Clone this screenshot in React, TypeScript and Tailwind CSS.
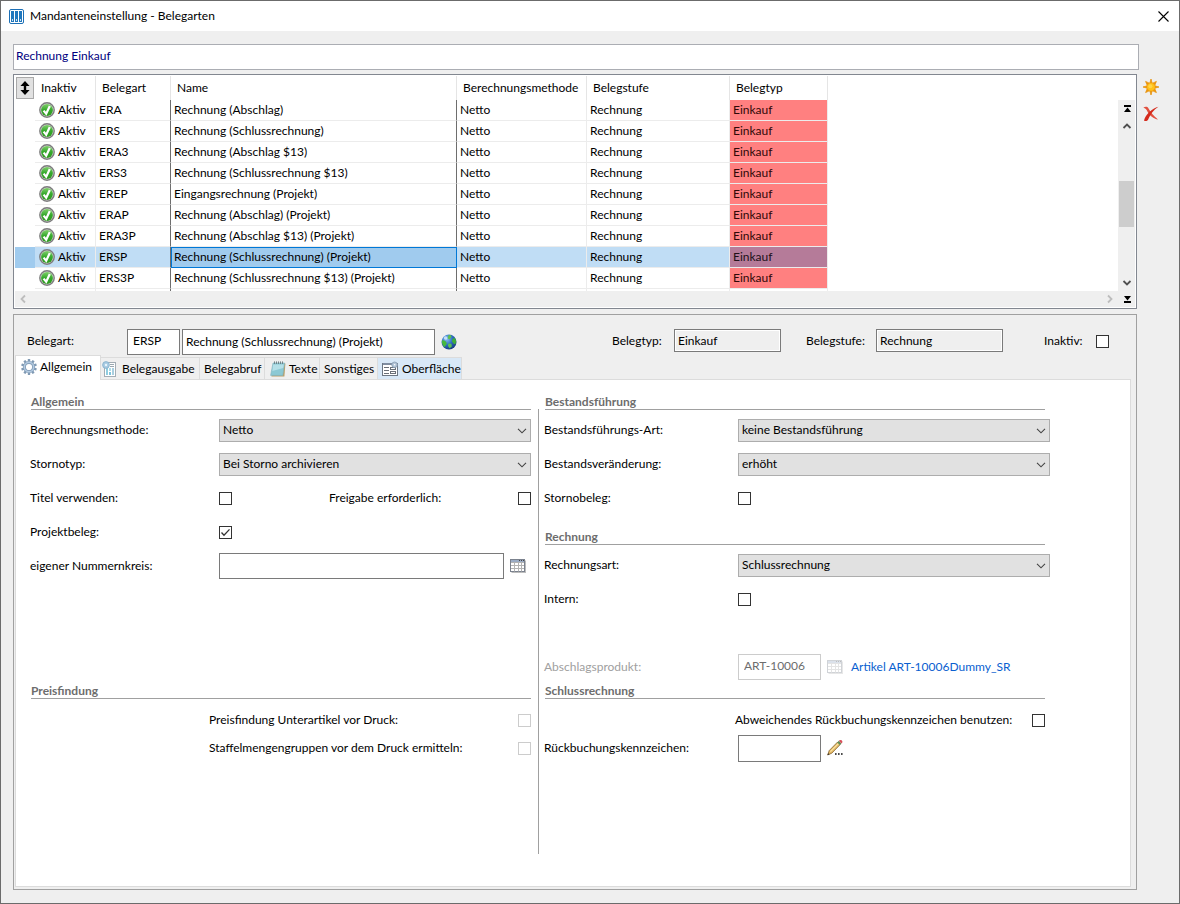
import React, { useState } from "react";

const rows: [string, string][] = [
  ["ERA", "Rechnung (Abschlag)"],
  ["ERS", "Rechnung (Schlussrechnung)"],
  ["ERA3", "Rechnung (Abschlag $13)"],
  ["ERS3", "Rechnung (Schlussrechnung $13)"],
  ["EREP", "Eingangsrechnung (Projekt)"],
  ["ERAP", "Rechnung (Abschlag) (Projekt)"],
  ["ERA3P", "Rechnung (Abschlag $13) (Projekt)"],
  ["ERSP", "Rechnung (Schlussrechnung) (Projekt)"],
  ["ERS3P", "Rechnung (Schlussrechnung $13) (Projekt)"],
];

function AppIcon() {
  return (
    <svg width="15" height="15" viewBox="0 0 15 15">
      <rect x="0.5" y="0.5" width="14" height="14" rx="1.5" fill="#fff" stroke="#1c6fb5" />
      {[2, 6, 10].map((x) => (
        <g key={x}>
          <rect x={x} y="2" width="3" height="11" fill="#1f77bd" />
          <rect x={x + 1} y="10" width="1" height="2" fill="#cfe3f3" />
        </g>
      ))}
    </svg>
  );
}

function CheckBadge() {
  return (
    <svg width="16" height="16" viewBox="0 0 16 16" className="shrink-0">
      <defs>
        <linearGradient id="badge" x1="0" y1="0" x2="0" y2="1">
          <stop offset="0" stopColor="#7fcf6a" />
          <stop offset="0.5" stopColor="#35a82c" />
          <stop offset="1" stopColor="#2f9a1f" />
        </linearGradient>
      </defs>
      <circle cx="8" cy="8" r="7.2" fill="#d4d4d4" stroke="#7d7d7d" strokeWidth="1.4" />
      <circle cx="8" cy="8" r="5.9" fill="url(#badge)" />
      <path d="M4.6 8.6 L7.2 11.8 L10.8 4" fill="none" stroke="#fff" strokeWidth="2.2" />
    </svg>
  );
}

function Sun() {
  return (
    <svg width="16" height="16" viewBox="0 0 16 16">
      <path
        d="M8 0 L9.2 4.4 L13.4 2.4 L11.6 6.8 L16 8 L11.6 9.2 L13.4 13.6 L9.2 11.6 L8 16 L6.8 11.6 L2.6 13.6 L4.4 9.2 L0 8 L4.4 6.8 L2.6 2.4 L6.8 4.4 Z"
        fill="#e8940f"
        stroke="#e8940f"
        strokeWidth="0.8"
      />
      <circle cx="8" cy="8" r="4.2" fill="#ffc21c" stroke="#f0960a" strokeWidth="0.6" />
      <circle cx="7.4" cy="7.2" r="2" fill="#ffd548" />
    </svg>
  );
}

function RedX() {
  return (
    <svg width="16" height="16" viewBox="0 0 16 16">
      <path d="M0.4 1.8 C2 0.4 4.4 0.6 5.4 2.2 C7.4 5.6 10 9.5 15 13.4 C10.6 12.8 6.6 9.4 4.4 5.4 C3.4 3.4 2.4 2.4 0.4 1.8 Z" fill="#e2503f" />
      <path d="M15.4 0.8 C10.6 4 7.4 8 5.4 13 C4.8 15 2.4 15.8 1 14.4 C2.6 8.8 9 2.2 15.4 0.8 Z" fill="#d42a1c" />
    </svg>
  );
}

function Globe() {
  return (
    <svg width="16" height="16" viewBox="0 0 16 16">
      <defs>
        <radialGradient id="sea" cx="0.35" cy="0.3" r="0.75">
          <stop offset="0" stopColor="#8fc4f2" />
          <stop offset="0.5" stopColor="#2f6fc4" />
          <stop offset="1" stopColor="#173a80" />
        </radialGradient>
      </defs>
      <circle cx="8" cy="8" r="7.5" fill="url(#sea)" />
      <path d="M7.4 1.4 C9 0.6 10.6 1.2 10.4 3 L8.4 5.6 L6.6 4.2 Z" fill="#5fc04a" />
      <path d="M11.4 5 L13.8 3.8 L15.2 7 L14.4 10.4 L12.4 9.6 L11 7.4 Z" fill="#3fae3a" />
      <path d="M1 6.6 C2.4 5.8 4 6.6 5.2 8 L5.8 10 L4.6 11.6 L3.6 13.2 C1.6 11.8 0.6 9.4 1 6.6 Z" fill="#46b83e" />
      <path d="M7.4 9.4 L10.4 9.8 L10.8 12.6 L8.6 14.2 L7 12 Z" fill="#5cc552" />
      <circle cx="4.6" cy="4" r="1.8" fill="#d6ecff" opacity="0.8" />
    </svg>
  );
}

function Gear() {
  const teeth = [0, 36, 72, 108, 144, 180, 216, 252, 288, 324];
  return (
    <svg width="16" height="16" viewBox="0 0 16 16" className="shrink-0">
      {teeth.map((a) => (
        <rect key={a} x="6.8" y="0.1" width="2.4" height="3" rx="0.4" fill="#7f99b3" transform={`rotate(${a} 8 8)`} />
      ))}
      <circle cx="8" cy="8" r="4.6" fill="#fff" stroke="#86a0ba" strokeWidth="3" />
      <circle cx="8" cy="8" r="4.7" fill="none" stroke="#b4cbe2" strokeWidth="1.4" />
    </svg>
  );
}

function ReportIcon() {
  return (
    <svg width="16" height="16" viewBox="0 0 16 16" className="shrink-0">
      <rect x="2.5" y="1.5" width="11" height="14" fill="#fff" stroke="#a3adb5" />
      <rect x="4" y="7" width="2" height="7" fill="#8fcde0" />
      <rect x="7" y="7" width="2" height="3" fill="#a9dbe8" />
      <rect x="7" y="11" width="2" height="3" fill="#7fc4dc" />
      <rect x="10" y="7" width="2" height="7" fill="#a9cfe0" />
      <path d="M8 3.5h4M8 5.5h4" stroke="#9aa7b0" />
      <circle cx="4" cy="4" r="3.4" fill="#a8cbe2" stroke="#84aeca" strokeWidth="0.8" />
      <circle cx="4" cy="4" r="1.2" fill="#e8f4fb" />
    </svg>
  );
}

function NotepadIcon() {
  return (
    <svg width="16" height="16" viewBox="0 0 16 16" className="shrink-0">
      <path d="M4 2.5 L15.4 2.5 L14.4 15.6 L1.4 15.6 Z" fill="#b9a06a" />
      <path d="M3 2 L14.6 2 L12.8 14.4 L0.6 14.4 Z" fill="#8cc9d4" stroke="#7fb2be" strokeWidth="0.6" />
      <path d="M3.2 3.6 L13.8 3.6 L13.2 7 L2.4 10 Z" fill="#b5e0e8" />
      <path d="M4.5 0.4v2.6M6.5 0.4v2.6M8.5 0.4v2.6M10.5 0.4v2.6M12.5 0.4v2.6" stroke="#6b7a80" strokeWidth="0.9" />
    </svg>
  );
}

function FormIcon() {
  return (
    <svg width="16" height="16" viewBox="0 0 16 16" className="shrink-0">
      <rect x="0.5" y="2.5" width="15" height="12" fill="#fff" stroke="#6c7683" />
      <rect x="1" y="2" width="14" height="2" fill="#7f8da0" />
      <path d="M2 6.5h5M2 9.5h5M2 12.5h5" stroke="#6a6f77" />
      <rect x="8.5" y="6.5" width="5" height="2" fill="#fff" stroke="#6a6f77" />
      <rect x="8.5" y="10.5" width="5" height="2" fill="#fff" stroke="#6a6f77" />
      <circle cx="12.6" cy="3.8" r="2.8" fill="#b4c6d8" stroke="#869bb0" strokeWidth="0.8" />
      <circle cx="12.6" cy="3.8" r="0.8" fill="#fff" />
    </svg>
  );
}

function GridIcon({ faded = false }: { faded?: boolean }) {
  return (
    <svg width="16" height="14" viewBox="0 0 16 14" opacity={faded ? 0.35 : 1} className="shrink-0">
      <rect x="1.5" y="1.5" width="14.5" height="12.5" fill="#bdbdbd" />
      <rect x="0.5" y="0.5" width="14" height="12" fill="#fff" stroke="#7b828e" />
      <rect x="1" y="1" width="13" height="2" fill="#9aabc4" />
      <path d="M1 3.5h13M1 6.5h13M1 9.5h13" stroke="#b3b3b3" />
      <path d="M4.5 3v9.5M8.5 3v9.5M11.5 3v9.5" stroke="#b3b3b3" />
      <path d="M9 1.5h1M11 1.5h1M13 1.5h1" stroke="#444" />
    </svg>
  );
}

function Pencil() {
  return (
    <svg width="17" height="18" viewBox="0 0 17 18" className="shrink-0">
      <path d="M0.6 16 L2.2 11.6 L10.6 3 L13.2 5.6 L4.8 14.2 Z" fill="#e3b764" stroke="#7a5a28" strokeWidth="0.7" />
      <path d="M3.4 12.6 L11.6 4.4" stroke="#fbe6a6" strokeWidth="1.2" />
      <path d="M10.2 3.4 L11.8 1.8 L14.4 4.4 L12.8 6 Z" fill="#5f8f5a" />
      <path d="M11.8 1.8 C12.6 0.8 13.8 0.6 14.8 1.4 C15.8 2.4 15.6 3.4 14.4 4.4 Z" fill="#d8505a" />
      <path d="M0.6 16 L1.2 14.2 L2.6 15.2 Z" fill="#222" />
      <path d="M8 15h1.6M11 15h1.6M14 15h1.6" stroke="#111" strokeWidth="1.6" />
    </svg>
  );
}

function Chevron({ d, className }: { d: string; className: string }) {
  return (
    <svg width="10" height="10" viewBox="0 0 10 10" className={className}>
      <path d={d} fill="none" stroke="currentColor" strokeWidth="1.8" />
    </svg>
  );
}

function Check(props: { id: string; checked?: boolean; disabled?: boolean }) {
  const [on, setOn] = useState(!!props.checked);
  return (
    <span className="relative flex size-[13px] shrink-0">
      <input
        id={props.id}
        type="checkbox"
        checked={on}
        disabled={props.disabled}
        onChange={() => setOn(!on)}
        className="size-[13px] appearance-none border border-[#333] bg-white disabled:border-[#ccc]"
      />
      {on && (
        <svg width="13" height="13" viewBox="0 0 13 13" className="pointer-events-none absolute inset-0">
          <path d="M2.5 6.5 L5 9.2 L10.5 3.4" fill="none" stroke="#333" strokeWidth="1.3" />
        </svg>
      )}
    </span>
  );
}

function Select({ id, value }: { id: string; value: string }) {
  return (
    <span className="relative flex flex-1">
      <select id={id} className="h-[23px] w-full appearance-none border border-[#adadad] bg-[#e1e1e1] px-[3px] leading-[20px]">
        <option>{value}</option>
      </select>
      <svg width="10" height="6" viewBox="0 0 10 6" className="pointer-events-none absolute top-[9px] right-[4px]">
        <path d="M1 0.8 L5 4.8 L9 0.8" fill="none" stroke="#444" strokeWidth="1.1" />
      </svg>
    </span>
  );
}

function Heading({ children, className = "" }: { children: React.ReactNode; className?: string }) {
  return (
    <h2 className={`ml-px h-[15px] border-b border-[#a0a0a0] font-bold leading-[14px] text-[#6d6d6d] ${className}`}>{children}</h2>
  );
}

function Row({ children, className = "h-[34px]" }: { children: React.ReactNode; className?: string }) {
  return <div className={`flex items-center ${className}`}>{children}</div>;
}

const tabs: { name: string; icon?: React.ReactNode }[] = [
  { name: "Allgemein", icon: <Gear /> },
  { name: "Belegausgabe", icon: <ReportIcon /> },
  { name: "Belegabruf" },
  { name: "Texte", icon: <NotepadIcon /> },
  { name: "Sonstiges" },
  { name: "Oberfläche", icon: <FormIcon /> },
];

const tabClass: Record<string, string> = {
  Allgemein: "h-[25px] w-[86px] bg-white gap-[3px] border-t border-l border-r pl-[5px] pb-[2px] -mb-px",
  Belegausgabe: "h-[22px] w-[99px] gap-[4px] border-t border-r pl-[1px]",
  Belegabruf: "h-[22px] w-[65px] border-t border-r pl-[4px]",
  Texte: "h-[22px] w-[55px] gap-[3px] border-t border-r pl-[5px]",
  Sonstiges: "h-[22px] w-[58px] border-t border-r pl-[4px]",
  Oberfläche: "h-[22px] w-[84px] gap-[4px] border-t border-r bg-[#d8e8f7] pl-[4px]",
};

export default function App() {
  return (
    <div className="flex min-h-screen flex-col border border-[#6b6b6b] bg-[#efefef] font-['Lato','Open_Sans',sans-serif] text-[12px] leading-[16px] text-black">
      <header className="flex h-[30px] items-center gap-[6px] bg-white pl-[8px]">
        <AppIcon />
        <h1 className="flex-1">Mandanteneinstellung - Belegarten</h1>
        <button aria-label="Schließen" className="mr-[10px] flex size-[12px] items-center justify-center">
          <svg width="11" height="11" viewBox="0 0 11 11">
            <path d="M0.5 0.5 L10.5 10.5 M10.5 0.5 L0.5 10.5" stroke="#000" strokeWidth="1.1" />
          </svg>
        </button>
      </header>

      <div className="flex flex-1 pt-[13px] pb-[13px] pl-[12px]">
        <main className="flex min-w-0 flex-1 flex-col">
          <input
            aria-label="Suche"
            defaultValue="Rechnung Einkauf"
            className="-mr-[2px] h-[26px] border border-[#abadb3] bg-white px-[2px] pb-[4px] text-[#000080]"
          />

          <section className="mt-[4px] flex h-[235px] flex-col border border-[#828790] bg-white p-px">
            <div className="flex min-h-0 flex-1">
              <div className="min-w-0 flex-1 overflow-hidden">
                <table className="w-[813px] table-fixed border-separate border-spacing-0 text-left">
                  <colgroup>
                    <col className="w-[20px]" />
                    <col className="w-[61px]" />
                    <col className="w-[75px]" />
                    <col className="w-[286px]" />
                    <col className="w-[130px]" />
                    <col className="w-[143px]" />
                    <col className="w-[98px]" />
                  </colgroup>
                  <thead>
                    <tr className="h-[24px]">
                      <th className="p-px">
                        <button aria-label="Sortieren" className="flex h-[22px] w-[18px] items-center justify-center border border-[#a9a9a9] bg-[#e1e1e1]">
                          <svg width="10" height="14" viewBox="0 0 10 14">
                            <path d="M5 0 L9.6 5 H6.2 V9 H9.6 L5 14 L0.4 9 H3.8 V5 H0.4 Z" fill="#000" />
                          </svg>
                        </button>
                      </th>
                      <th className="border-r border-[#e5e5e5] p-0 pl-[6px] font-normal">Inaktiv</th>
                      <th className="border-r border-[#e5e5e5] p-0 pl-[6px] font-normal">Belegart</th>
                      <th className="border-r border-[#e5e5e5] p-0 pl-[6px] font-normal">Name</th>
                      <th className="border-r border-[#e5e5e5] p-0 pl-[6px] font-normal">Berechnungsmethode</th>
                      <th className="border-r border-[#e5e5e5] p-0 pl-[6px] font-normal">Belegstufe</th>
                      <th className="border-r border-[#e5e5e5] p-0 pl-[6px] font-normal">Belegtyp</th>
                    </tr>
                  </thead>
                  <tbody>
                    {rows.map(([code, name]) => {
                      const sel = code === "ERSP";
                      return (
                        <tr key={code} className={sel ? "h-[21px] bg-[#c0ddf5]" : "h-[21px]"}>
                          <td className={sel ? "bg-[#a0cbee] p-0" : "p-0"} />
                          <td className="border-r border-b border-[#ececec] p-0 pl-[4px]">
                            <span className="flex items-center gap-[3px]">
                              <CheckBadge />
                              Aktiv
                            </span>
                          </td>
                          <td className="border-r border-b border-r-[#6e6e6e] border-b-[#ececec] p-0 pl-[3px]">{code}</td>
                          <td
                            className={
                              sel
                                ? "border-r border-b border-r-[#6e6e6e] border-b-[#ececec] bg-[#a0cbee] p-0 pl-[3px] outline outline-[#0078d7] -outline-offset-1"
                                : "border-r border-b border-r-[#6e6e6e] border-b-[#ececec] p-0 pl-[3px]"
                            }
                          >
                            {name}
                          </td>
                          <td className="border-r border-b border-[#ececec] p-0 pl-[3px]">Netto</td>
                          <td className="border-r border-b border-[#ececec] p-0 pl-[3px]">Rechnung</td>
                          <td
                            className={
                              sel
                                ? "border-r border-b border-[#ececec] bg-[#b57b99] p-0 pl-[3px] text-[#201018]"
                                : "border-r border-b border-[#ececec] bg-[#ff8080] p-0 pl-[3px] text-[#300808]"
                            }
                          >
                            Einkauf
                          </td>
                        </tr>
                      );
                    })}
                    <tr className="h-[2px]">
                      <td className="p-0" />
                      <td className="border-r border-[#ececec] p-0" />
                      <td className="border-r border-[#6e6e6e] p-0" />
                      <td className="border-r border-[#6e6e6e] p-0" />
                      <td className="border-r border-[#ececec] p-0" />
                      <td className="border-r border-[#ececec] p-0" />
                      <td className="border-r border-[#ececec] p-0" />
                    </tr>
                  </tbody>
                </table>
              </div>
              <div className="flex w-[17px] flex-col pt-[24px]">
                <div className="flex flex-1 flex-col items-center bg-[#efefef]">
                  <button aria-label="Zum Anfang" className="flex h-[17px] w-full items-center justify-center pl-[2px]">
                    <svg width="7" height="7" viewBox="0 0 7 7">
                      <path d="M0 0 H7 V2 H0 Z M3.5 2.6 L7 7 H0 Z" fill="#000" />
                    </svg>
                  </button>
                  <button aria-label="Nach oben" className="flex h-[17px] items-center">
                    <Chevron d="M1.5 7 L5 3.5 L8.5 7" className="text-[#505050]" />
                  </button>
                  <div className="mt-[47px] h-[46px] w-[15px] bg-[#cdcdcd]" />
                  <button aria-label="Nach unten" className="mt-auto flex h-[17px] items-center">
                    <Chevron d="M1.5 3 L5 6.5 L8.5 3" className="text-[#505050]" />
                  </button>
                </div>
              </div>
            </div>
            <div className="flex h-[16px] items-center bg-[#efefef] pr-[4px] pl-[3px]">
              <button aria-label="Nach links">
                <Chevron d="M7 1.5 L3.5 5 L7 8.5" className="text-[#bdbdbd]" />
              </button>
              <button aria-label="Nach rechts" className="mr-[9px] ml-auto">
                <Chevron d="M3 1.5 L6.5 5 L3 8.5" className="text-[#bdbdbd]" />
              </button>
              <button aria-label="Zum Ende">
                <svg width="7" height="7" viewBox="0 0 7 7">
                  <path d="M0 5 H7 V7 H0 Z M3.5 4.4 L7 0 H0 Z" fill="#000" />
                </svg>
              </button>
            </div>
          </section>

          <section className="mt-[5px] flex flex-1 flex-col border border-[#a0a0a0] px-px pb-[2px]">
            <div className="flex h-[40px] items-start pt-[14px] pl-[12px]">
              <label htmlFor="belegart" className="mt-[4px] w-[100px]">
                Belegart:
              </label>
              <input id="belegart" defaultValue="ERSP" className="h-[26px] w-[53px] border border-[#7a7a7a] bg-white px-[5px] pb-[3px]" />
              <input
                aria-label="Bezeichnung"
                defaultValue="Rechnung (Schlussrechnung) (Projekt)"
                className="ml-[2px] h-[26px] w-[253px] border border-[#7a7a7a] bg-white px-[3px] pb-px"
              />
              <button aria-label="Übersetzung" className="mt-[5px] ml-[6px]">
                <Globe />
              </button>
              <div className="ml-auto flex items-start pr-[26px]">
                <label htmlFor="belegtyp" className="mt-[4px] w-[62px]">
                  Belegtyp:
                </label>
                <input id="belegtyp" readOnly defaultValue="Einkauf" className="h-[23px] w-[107px] border border-[#7a7a7a] bg-[#efefef] px-[3px] shadow-[inset_0_0_0_1px_#fff]" />
                <label htmlFor="belegstufe" className="mt-[4px] ml-[25px] w-[70px]">
                  Belegstufe:
                </label>
                <input id="belegstufe" readOnly defaultValue="Rechnung" className="h-[23px] w-[127px] border border-[#7a7a7a] bg-[#efefef] px-[3px] shadow-[inset_0_0_0_1px_#fff]" />
                <label htmlFor="inaktiv" className="mt-[4px] ml-[41px] w-[52px]">
                  Inaktiv:
                </label>
                <span className="mt-[6px]">
                  <Check id="inaktiv" />
                </span>
              </div>
            </div>

            <div role="tablist" className="flex items-end">
              {tabs.map((t) => (
                <button
                  key={t.name}
                  role="tab"
                  aria-selected={t.name === "Allgemein"}
                  className={`relative flex items-center border-[#dcdcdc] whitespace-nowrap ${tabClass[t.name]}`}
                >
                  {t.icon}
                  {t.name}
                </button>
              ))}
            </div>

            <div className="mr-[4px] flex flex-1 flex-col border border-[#dcdcdc] bg-white pt-[15px] pr-[80px] pb-[32px] pl-[14px]">
              <div className="grid flex-1 grid-cols-[501fr_13px_506fr] grid-rows-[auto_1fr]">
                <section>
                  <Heading>Allgemein</Heading>
                  <div className="pt-[3px]">
                    <Row>
                      <label htmlFor="methode" className="w-[189px]">Berechnungsmethode:</label>
                      <Select id="methode" value="Netto" />
                    </Row>
                    <Row>
                      <label htmlFor="stornotyp" className="w-[189px]">Stornotyp:</label>
                      <Select id="stornotyp" value="Bei Storno archivieren" />
                    </Row>
                    <Row>
                      <label htmlFor="titel" className="w-[189px]">Titel verwenden:</label>
                      <Check id="titel" />
                      <label htmlFor="freigabe" className="mr-auto ml-[97px]">Freigabe erforderlich:</label>
                      <Check id="freigabe" />
                    </Row>
                    <Row>
                      <label htmlFor="projekt" className="w-[189px]">Projektbeleg:</label>
                      <Check id="projekt" checked />
                    </Row>
                    <Row>
                      <label htmlFor="kreis" className="w-[189px]">eigener Nummernkreis:</label>
                      <input id="kreis" className="h-[26px] min-w-0 flex-1 border border-[#7a7a7a] bg-white px-[3px]" />
                      <button aria-label="Nummernkreis wählen" className="mr-[5px] ml-[6px]">
                        <GridIcon />
                      </button>
                    </Row>
                  </div>
                </section>

                <div className="row-span-2 mt-[14px] ml-[7px] w-px bg-[#a0a0a0]" />

                <section>
                  <Heading className="mr-[5px]">Bestandsführung</Heading>
                  <div className="pt-[3px]">
                    <Row>
                      <label htmlFor="art" className="w-[194px]">Bestandsführungs-Art:</label>
                      <Select id="art" value="keine Bestandsführung" />
                    </Row>
                    <Row>
                      <label htmlFor="veraenderung" className="w-[194px]">Bestandsveränderung:</label>
                      <Select id="veraenderung" value="erhöht" />
                    </Row>
                    <Row>
                      <label htmlFor="storno" className="w-[194px]">Stornobeleg:</label>
                      <Check id="storno" />
                    </Row>
                  </div>
                  <Heading className="mt-[15px] mr-[5px]">Rechnung</Heading>
                  <div className="pt-[3px]">
                    <Row>
                      <label htmlFor="rechnungsart" className="w-[194px]">Rechnungsart:</label>
                      <Select id="rechnungsart" value="Schlussrechnung" />
                    </Row>
                    <Row>
                      <label htmlFor="intern" className="w-[194px]">Intern:</label>
                      <Check id="intern" />
                    </Row>
                    <Row className="mt-[34px] h-[34px]">
                      <label htmlFor="produkt" className="w-[194px] text-[#a0a0a0]">Abschlagsprodukt:</label>
                      <input id="produkt" disabled defaultValue="ART-10006" className="h-[26px] w-[83px] border border-[#ccc] bg-white px-[5px] pb-[3px] text-[#6d6d6d]" />
                      <button disabled aria-label="Artikel wählen" className="ml-[6px]">
                        <GridIcon faded />
                      </button>
                      <a href="#artikel" className="ml-[8px] whitespace-nowrap text-[#0a5fd0]">Artikel ART-10006Dummy_SR</a>
                    </Row>
                  </div>
                </section>

                <section>
                  <Heading>Preisfindung</Heading>
                  <div className="pt-[7px]">
                    <Row className="h-[28px] pl-[179px]">
                      <label htmlFor="unterartikel" className="flex-1">Preisfindung Unterartikel vor Druck:</label>
                      <Check id="unterartikel" disabled />
                    </Row>
                    <Row className="h-[28px] pl-[179px]">
                      <label htmlFor="staffel" className="flex-1">Staffelmengengruppen vor dem Druck ermitteln:</label>
                      <Check id="staffel" disabled />
                    </Row>
                  </div>
                </section>

                <section>
                  <Heading className="mr-[5px]">Schlussrechnung</Heading>
                  <div className="pt-[7px]">
                    <Row className="h-[28px] pr-[5px] pl-[191px]">
                      <label htmlFor="abweichend" className="flex-1 whitespace-nowrap">Abweichendes Rückbuchungskennzeichen benutzen:</label>
                      <Check id="abweichend" />
                    </Row>
                    <Row className="h-[28px]">
                      <label htmlFor="kennzeichen" className="w-[194px]">Rückbuchungskennzeichen:</label>
                      <input id="kennzeichen" className="h-[27px] w-[83px] border border-[#7a7a7a] bg-white px-[5px]" />
                      <button aria-label="Kennzeichen bearbeiten" className="ml-[6px]">
                        <Pencil />
                      </button>
                    </Row>
                  </div>
                </section>
              </div>
            </div>
          </section>
        </main>

        <aside className="flex w-[42px] flex-col items-start gap-[11px] pt-[35px] pl-[6px]">
          <button aria-label="Neu">
            <Sun />
          </button>
          <button aria-label="Löschen">
            <RedX />
          </button>
        </aside>
      </div>
    </div>
  );
}
